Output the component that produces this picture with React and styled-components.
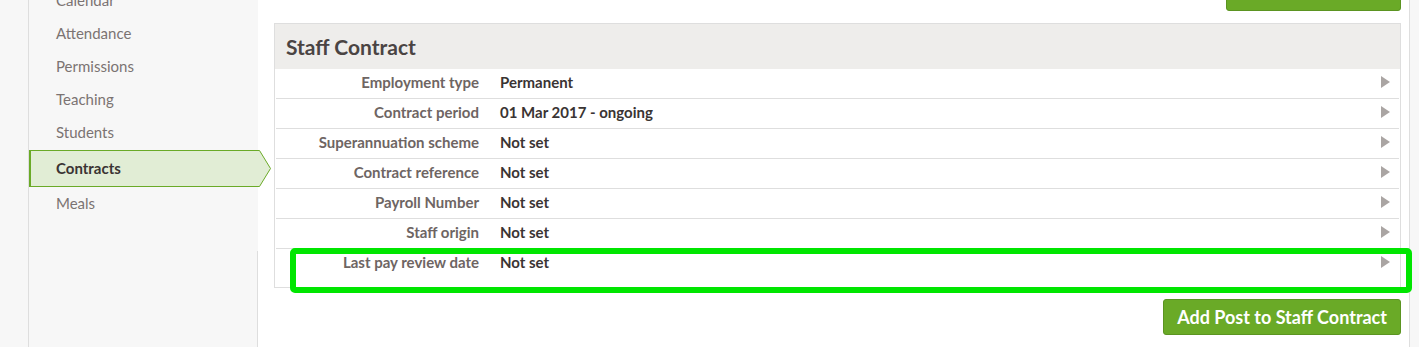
import React from 'react';
import styled, { createGlobalStyle, css } from 'styled-components';

const GlobalStyle = createGlobalStyle`
  html, body {
    margin: 0;
    padding: 0;
    background: #ffffff;
    font-family: Lato, "Open Sans", sans-serif;
  }
  #root {
    height: 347px;
    overflow: hidden;
  }
`;

const Page = styled.div`
  position: relative;
  display: flex;
  height: 347px;
  background: #f7f7f7;
`;

const Gutter = styled.div`
  width: 28px;
  flex: none;
  border-right: 1px solid #dedede;
`;

const Sidebar = styled.nav`
  width: 229px;
  flex: none;
  display: flex;
  flex-direction: column;
  background: #f7f7f7;
`;

const NavList = styled.ul`
  list-style: none;
  margin: -16px 0 0;
  padding: 0;
`;

const NavItem = styled.li`
  position: relative;
  padding-left: 27px;
  line-height: 33px;
  font-size: 15px;
  color: #7b7372;

  ${props => props.active && css`
    margin-top: 1px;
    padding-left: 25px;
    line-height: 35px;
    width: 230px;
    box-sizing: border-box;
    background: #e1edd5;
    border-top: 1px solid #6aaa27;
    border-bottom: 1px solid #6aaa27;
    border-left: 2px solid #6aaa27;
    color: #3a3433;
    font-weight: 700;
  `}
`;

const Pointer = styled.svg`
  position: absolute;
  top: -1px;
  left: 100%;
  width: 12px;
  height: 37px;
`;

const SideFiller = styled.div`
  flex: 1;
  margin-top: 31px;
  width: 228px;
  border-right: 1px solid #dedede;
`;

const Main = styled.main`
  width: 1127px;
  flex: none;
  background: #ffffff;
  border-right: 1px solid #dedede;
  padding: 0 8px 0 16px;
  display: flex;
  flex-direction: column;
`;

const Toolbar = styled.div`
  display: flex;
  justify-content: flex-end;
  margin-top: -25px;
  margin-bottom: 12px;
`;

const Button = styled.button`
  height: 36px;
  padding: 0 13px;
  background: #6aaa27;
  border: 1px solid #5b9421;
  border-radius: 3px;
  color: #ffffff;
  font-family: Lato, "Open Sans", sans-serif;
  font-weight: 700;
  font-size: 18px;
  white-space: nowrap;
  cursor: pointer;

  ${props => props.wide && css`
    width: 175px;
    font-size: 16px;
  `}
`;

const Panel = styled.section`
  border: 1px solid #dedede;
  background: #ffffff;
  padding-bottom: 16px;
`;

const PanelHeader = styled.h2`
  margin: 0;
  height: 45px;
  line-height: 45px;
  padding-left: 11px;
  background: #eeedeb;
  font-size: 21px;
  font-weight: 700;
  color: #4a4443;
`;

const Row = styled.div`
  display: grid;
  grid-template-columns: 203px 1fr 30px;
  column-gap: 21px;
  margin: 0 1px;
  padding: 4px 0 7px;
  line-height: 18px;
  font-size: 15px;
  font-weight: 700;
  border-bottom: 1px solid #dedede;

  &:last-child {
    border-bottom: none;
    padding-bottom: 0;
  }
`;

const Label = styled.div`
  text-align: right;
  color: #6e6563;
`;

const Value = styled.div`
  color: #3a3433;
`;

const Arrow = styled.svg`
  justify-self: end;
  width: 9px;
  height: 12px;
  margin: 3px 9px 0 0;
`;

const Footer = styled.div`
  display: flex;
  justify-content: flex-end;
  margin-top: 11px;
`;

const Highlight = styled.div`
  position: absolute;
  left: 290px;
  top: 248px;
  width: 1122px;
  height: 45px;
  box-sizing: border-box;
  border: 6px solid #00e600;
  border-radius: 5px;
  pointer-events: none;
`;

const RightGutter = styled.div`
  flex: 1;
  background: #f7f7f7;
`;

const navItems = ['Calendar', 'Attendance', 'Permissions', 'Teaching', 'Students', 'Contracts', 'Meals'];

const rows = [
  { label: 'Employment type', value: 'Permanent' },
  { label: 'Contract period', value: '01 Mar 2017 - ongoing' },
  { label: 'Superannuation scheme', value: 'Not set' },
  { label: 'Contract reference', value: 'Not set' },
  { label: 'Payroll Number', value: 'Not set' },
  { label: 'Staff origin', value: 'Not set' },
  { label: 'Last pay review date', value: 'Not set' },
];

export default function App() {
  return (
    <>
      <GlobalStyle />
      <Page>
        <Gutter />
        <Sidebar>
          <NavList>
            {navItems.map(item => (
              <NavItem key={item} active={item === 'Contracts'}>
                {item}
                {item === 'Contracts' && (
                  <Pointer viewBox="0 0 12 37">
                    <path d="M0 0.5 L0.5 0.5 L11.5 18.5 L0.5 36.5 L0 36.5 Z" fill="#e1edd5" />
                    <path d="M0 0.5 L0.5 0.5 L11.5 18.5 L0.5 36.5 L0 36.5" fill="none" stroke="#6aaa27" strokeWidth="1" />
                  </Pointer>
                )}
              </NavItem>
            ))}
          </NavList>
          <SideFiller />
        </Sidebar>
        <Main>
          <Toolbar>
            <Button wide>Add Staff Contract</Button>
          </Toolbar>
          <Panel>
            <PanelHeader>Staff Contract</PanelHeader>
            {rows.map(row => (
              <Row key={row.label}>
                <Label>{row.label}</Label>
                <Value>{row.value}</Value>
                <Arrow viewBox="0 0 9 12">
                  <path d="M0 0 L9 6 L0 12 Z" fill="#aaa5a3" />
                </Arrow>
              </Row>
            ))}
          </Panel>
          <Footer>
            <Button>Add Post to Staff Contract</Button>
          </Footer>
        </Main>
        <RightGutter />
        <Highlight />
      </Page>
    </>
  );
}
